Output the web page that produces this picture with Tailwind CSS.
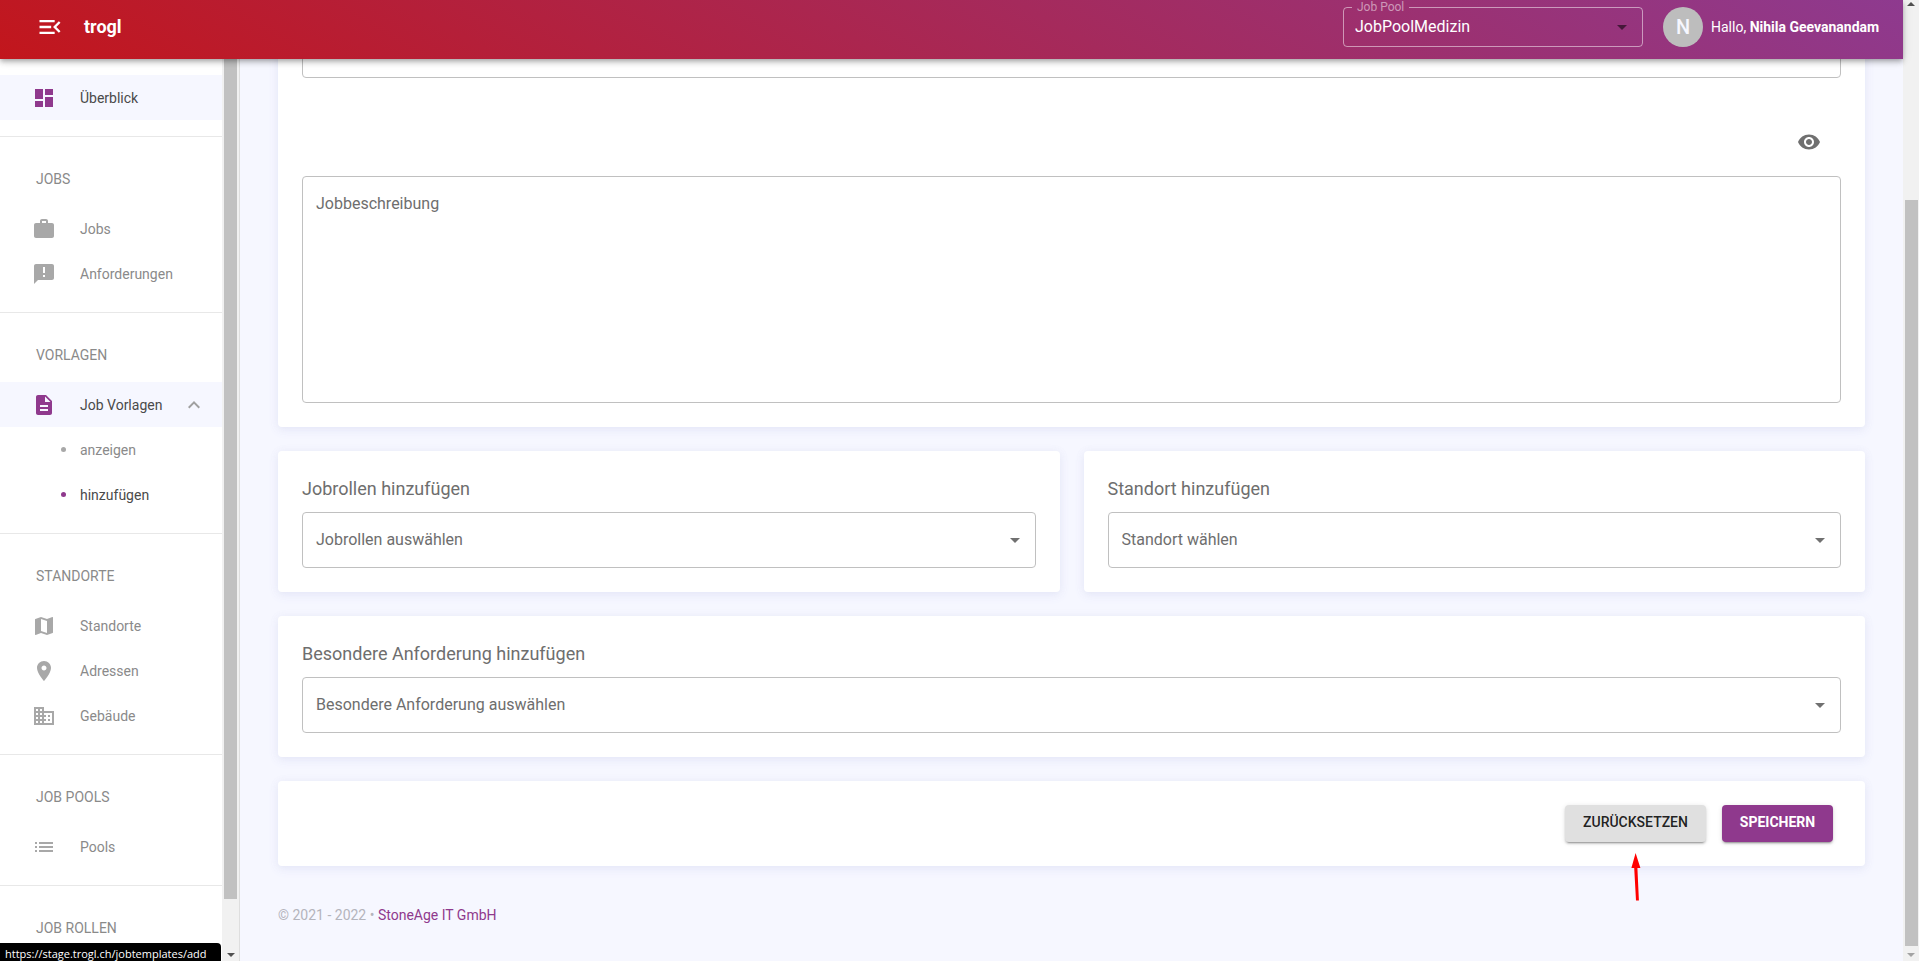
<!DOCTYPE html>
<html lang="de">
<head>
<meta charset="utf-8">
<meta name="viewport" content="width=device-width, initial-scale=1">
<title>trogl – Job Vorlage hinzufügen</title>
<script src="https://cdn.jsdelivr.net/npm/@tailwindcss/browser@4"></script>
</head>
<body class="flex h-screen overflow-hidden bg-[#f6f7ff] font-['Roboto',sans-serif] text-sm text-[#4a4a4a]">

<div class="flex min-w-0 flex-1 flex-col">
  <header class="z-10 flex h-[59px] shrink-0 items-start justify-between bg-[linear-gradient(30deg,#c2161c,#8e3a8f)] pr-5 pl-9 text-white shadow-[0_2px_4px_-1px_rgba(0,0,0,0.2),0_4px_5px_0_rgba(0,0,0,0.14),0_1px_10px_0_rgba(0,0,0,0.12)]">
    <div class="flex items-center gap-5 pt-[13px]">
      <button type="button" aria-label="Menü einklappen" class="size-7">
        <svg viewBox="0 0 24 24" class="size-7 fill-current"><path d="M3 18h13v-2H3v2zm0-5h10v-2H3v2zm0-7v2h13V6H3zm18 9.59L17.42 12 21 8.41 19.59 7l-5 5 5 5L21 15.59z"/></svg>
      </button>
      <a href="#" class="text-lg leading-7 font-bold">trogl</a>
    </div>
    <div class="flex items-start">
      <fieldset class="relative h-[47px] w-[300px] rounded border border-white/50">
        <legend class="ml-2 px-[5px] text-xs leading-[14px] text-white/50"><label for="pool">Job Pool</label></legend>
        <select id="pool" class="block h-[26px] w-full appearance-none bg-transparent pl-[11px] text-base leading-[26px] text-white">
          <option>JobPoolMedizin</option>
        </select>
        <svg viewBox="0 0 24 24" class="pointer-events-none absolute right-2 bottom-[7px] size-6 fill-black/54"><path d="M7 10l5 5 5-5z"/></svg>
      </fieldset>
      <div class="flex items-center pt-[7px] pl-5">
        <div class="flex size-10 items-center justify-center rounded-full bg-[#bdbdbd] text-xl font-medium text-[#f6f7ff]">N</div>
        <p class="min-w-[180px] pl-2">Hallo, <b class="font-bold">Nihila Geevanandam</b></p>
      </div>
    </div>
  </header>

  <div class="flex min-h-0 flex-1">
    <nav class="w-[222px] shrink-0 overflow-hidden bg-white pt-4 text-[#8a8a8a]" aria-label="Hauptnavigation">
      <a href="#" class="flex h-[45px] items-center gap-6 bg-[#f6f7ff] pl-8 text-[#4a4a4a]">
        <svg viewBox="0 0 24 24" class="size-6 fill-[#8f398d]"><path d="M3 13h8V3H3v10zm0 8h8v-6H3v6zm10 0h8V11h-8v10zm0-18v6h8V3h-8z"/></svg>Überblick</a>

      <section class="mt-4 border-t border-[#e8e8e8]">
        <h2 class="px-9 pt-8 pb-4 leading-[21px]">JOBS</h2>
        <a href="#" class="flex h-[45px] items-center gap-6 pl-8">
          <svg viewBox="0 0 24 24" class="size-6 fill-[#a8a8a8]"><path d="M20 6h-4V4c0-1.11-.89-2-2-2h-4c-1.11 0-2 .89-2 2v2H4c-1.11 0-1.99.89-1.99 2L2 19c0 1.11.89 2 2 2h16c1.11 0 2-.89 2-2V8c0-1.11-.89-2-2-2zm-6 0h-4V4h4v2z"/></svg>Jobs</a>
        <a href="#" class="flex h-[45px] items-center gap-6 pl-8">
          <svg viewBox="0 0 24 24" class="size-6 fill-[#a8a8a8]"><path d="M20 2H4c-1.1 0-1.99.9-1.99 2L2 22l4-4h14c1.1 0 2-.9 2-2V4c0-1.1-.9-2-2-2zm-7 13h-2v-2h2v2zm0-4h-2V5h2v6z"/></svg>Anforderungen</a>
      </section>

      <section class="mt-4 border-t border-[#e8e8e8]">
        <h2 class="px-9 pt-8 pb-4 leading-[21px]">VORLAGEN</h2>
        <button type="button" aria-expanded="true" class="flex h-[45px] w-full items-center gap-6 bg-[#f6f7ff] pr-4 pl-8 text-[#4a4a4a]">
          <svg viewBox="0 0 24 24" class="size-6 fill-[#8f398d]"><path d="M14 2H6c-1.1 0-1.99.9-1.99 2L4 20c0 1.1.89 2 1.99 2H18c1.1 0 2-.9 2-2V8l-6-6zm2 16H8v-2h8v2zm0-4H8v-2h8v2zm-3-5V3.5L18.5 9H13z"/></svg>
          <span class="flex-1 text-left whitespace-nowrap">Job Vorlagen</span>
          <svg viewBox="0 0 24 24" class="-ml-6 size-6 fill-[#a0a0a0]"><path d="M12 8l-6 6 1.41 1.41L12 10.83l4.59 4.58L18 14z"/></svg>
        </button>
        <a href="#" class="flex h-[45px] items-center gap-3.5 pl-[61px]"><i class="size-[5px] rounded-full bg-[#a8a8a8]"></i>anzeigen</a>
        <a href="#" class="flex h-[45px] items-center gap-3.5 pl-[61px] text-[#4a4a4a]"><i class="size-[5px] rounded-full bg-[#8f398d]"></i>hinzufügen</a>
      </section>

      <section class="mt-4 border-t border-[#e8e8e8]">
        <h2 class="px-9 pt-8 pb-4 leading-[21px]">STANDORTE</h2>
        <a href="#" class="flex h-[45px] items-center gap-6 pl-8">
          <svg viewBox="0 0 24 24" class="size-6 fill-[#a8a8a8]"><path d="M20.5 3l-.16.03L15 5.1 9 3 3.36 4.9c-.21.07-.36.25-.36.48V20.5c0 .28.22.5.5.5l.16-.03L9 18.9l6 2.1 5.64-1.9c.21-.07.36-.25.36-.48V3.5c0-.28-.22-.5-.5-.5zM15 19l-6-2.11V5l6 2.11V19z"/></svg>Standorte</a>
        <a href="#" class="flex h-[45px] items-center gap-6 pl-8">
          <svg viewBox="0 0 24 24" class="size-6 fill-[#a8a8a8]"><path d="M12 2C8.13 2 5 5.13 5 9c0 5.25 7 13 7 13s7-7.75 7-13c0-3.87-3.13-7-7-7zm0 9.5c-1.38 0-2.5-1.12-2.5-2.5s1.12-2.5 2.5-2.5 2.5 1.12 2.5 2.5-1.12 2.5-2.5 2.5z"/></svg>Adressen</a>
        <a href="#" class="flex h-[45px] items-center gap-6 pl-8">
          <svg viewBox="0 0 24 24" class="size-6 fill-[#a8a8a8]"><path d="M12 7V3H2v18h20V7H12zM6 19H4v-2h2v2zm0-4H4v-2h2v2zm0-4H4V9h2v2zm0-4H4V5h2v2zm4 12H8v-2h2v2zm0-4H8v-2h2v2zm0-4H8V9h2v2zm0-4H8V5h2v2zm10 12h-8v-2h2v-2h-2v-2h2v-2h-2V9h8v10zm-2-8h-2v2h2v-2zm0 4h-2v2h2v-2z"/></svg>Gebäude</a>
      </section>

      <section class="mt-4 border-t border-[#e8e8e8]">
        <h2 class="px-9 pt-8 pb-4 leading-[21px]">JOB POOLS</h2>
        <a href="#" class="flex h-[45px] items-center gap-6 pl-8">
          <svg viewBox="0 0 24 24" class="size-6 fill-[#a8a8a8]"><path d="M3 13h2v-2H3v2zm0 4h2v-2H3v2zm0-8h2V7H3v2zm4 4h14v-2H7v2zm0 4h14v-2H7v2zM7 7v2h14V7H7z"/></svg>Pools</a>
      </section>

      <section class="mt-4 border-t border-[#e8e8e8]">
        <h2 class="px-9 pt-8 leading-[21px]">JOB ROLLEN</h2>
      </section>
    </nav>

    <!-- sidebar scrollbar -->
    <div class="flex w-[18px] shrink-0 flex-col items-center border-r border-[#dedede] bg-[#f1f1f1]" aria-hidden="true">
      <div class="w-[13px] flex-1 bg-[#c1c1c1]"></div>
      <div class="flex h-[62px] items-end pb-1"><svg viewBox="0 0 8 4" class="h-1 w-2 fill-[#505050]"><path d="M0 0h8L4 4z"/></svg></div>
    </div>

    <main class="flex min-w-0 flex-1 flex-col justify-end overflow-hidden px-[38px] pb-[35px]">
      <form class="flex shrink-0 flex-col gap-6">
        <div class="rounded bg-white p-6 shadow-[0_3px_11px_0_#e8eafc,0_3px_3px_-2px_#b2b2b21a,0_1px_8px_0_#9a9a9a1a]">
          <input type="text" aria-label="Titel" class="block h-14 w-full rounded border border-[#c0c0c0] px-3.5 text-base">
          <div class="flex justify-end pt-10 pr-2 pb-2.5">
            <button type="button" aria-label="Vorschau" class="p-3">
              <svg viewBox="0 0 24 24" class="size-6 fill-[#707070]"><path d="M12 4.5C7 4.5 2.73 7.61 1 12c1.73 4.39 6 7.5 11 7.5s9.27-3.11 11-7.5c-1.73-4.39-6-7.5-11-7.5zM12 17c-2.76 0-5-2.24-5-5s2.24-5 5-5 5 2.24 5 5-2.24 5-5 5zm0-8c-1.66 0-3 1.34-3 3s1.34 3 3 3 3-1.34 3-3-1.34-3-3-3z"/></svg>
            </button>
          </div>
          <textarea aria-label="Jobbeschreibung" placeholder="Jobbeschreibung" class="block h-[227px] w-full resize-none rounded border border-[#c0c0c0] px-[13px] py-[15px] text-base leading-6 placeholder:text-[#6e6e6e]"></textarea>
        </div>

        <div class="grid grid-cols-2 gap-6">
          <div class="rounded bg-white p-6 shadow-[0_3px_11px_0_#e8eafc,0_3px_3px_-2px_#b2b2b21a,0_1px_8px_0_#9a9a9a1a]">
            <label for="rollen" class="mb-2.5 block text-lg leading-[27px] text-[#6e6e6e]">Jobrollen hinzufügen</label>
            <div class="relative">
              <select id="rollen" class="block h-14 w-full appearance-none rounded border border-[#c0c0c0] bg-white px-[13px] text-base text-[#6e6e6e]"><option>Jobrollen auswählen</option></select>
              <svg viewBox="0 0 24 24" class="pointer-events-none absolute top-4 right-[9px] size-6 fill-[#707070]"><path d="M7 10l5 5 5-5z"/></svg>
            </div>
          </div>
          <div class="rounded bg-white p-6 shadow-[0_3px_11px_0_#e8eafc,0_3px_3px_-2px_#b2b2b21a,0_1px_8px_0_#9a9a9a1a]">
            <label for="standort" class="mb-2.5 block text-lg leading-[27px] text-[#6e6e6e]">Standort hinzufügen</label>
            <div class="relative">
              <select id="standort" class="block h-14 w-full appearance-none rounded border border-[#c0c0c0] bg-white px-[13px] text-base text-[#6e6e6e]"><option>Standort wählen</option></select>
              <svg viewBox="0 0 24 24" class="pointer-events-none absolute top-4 right-[9px] size-6 fill-[#707070]"><path d="M7 10l5 5 5-5z"/></svg>
            </div>
          </div>
        </div>

        <div class="rounded bg-white p-6 shadow-[0_3px_11px_0_#e8eafc,0_3px_3px_-2px_#b2b2b21a,0_1px_8px_0_#9a9a9a1a]">
          <label for="anforderung" class="mb-2.5 block text-lg leading-[27px] text-[#6e6e6e]">Besondere Anforderung hinzufügen</label>
          <div class="relative">
            <select id="anforderung" class="block h-14 w-full appearance-none rounded border border-[#c0c0c0] bg-white px-[13px] text-base text-[#6e6e6e]"><option>Besondere Anforderung auswählen</option></select>
            <svg viewBox="0 0 24 24" class="pointer-events-none absolute top-4 right-[9px] size-6 fill-[#707070]"><path d="M7 10l5 5 5-5z"/></svg>
          </div>
        </div>

        <div class="flex justify-end gap-4 rounded bg-white py-6 pr-8 pl-6 shadow-[0_3px_11px_0_#e8eafc,0_3px_3px_-2px_#b2b2b21a,0_1px_8px_0_#9a9a9a1a]">
          <div class="relative">
            <button type="reset" class="h-[37px] w-[141px] rounded bg-[#e0e0e0] pb-[3px] font-medium text-black/87 shadow-[0_3px_1px_-2px_rgba(0,0,0,0.2),0_2px_2px_0_rgba(0,0,0,0.14),0_1px_5px_0_rgba(0,0,0,0.12)]">ZURÜCKSETZEN</button>
            <svg viewBox="0 0 10 48" class="pointer-events-none absolute top-12 left-[66px] h-12 w-2.5" aria-hidden="true"><path d="M4.6 0L9.4 15H6.4L7.9 47.5H5L3.2 15H0.4z" fill="#ff0000"/></svg>
          </div>
          <button type="submit" class="h-[37px] w-[111px] rounded bg-[#8f398d] pb-[3px] font-bold text-white shadow-[0_3px_1px_-2px_rgba(0,0,0,0.2),0_2px_2px_0_rgba(0,0,0,0.14),0_1px_5px_0_rgba(0,0,0,0.12)]">SPEICHERN</button>
        </div>
      </form>
      <footer class="shrink-0 pt-[39px] leading-[21px] text-[#b4b4bc]">© 2021 - 2022 • <a href="#" class="text-[#8f398d]">StoneAge IT GmbH</a></footer>
    </main>
  </div>
</div>

<!-- window scrollbar -->
<div class="flex w-4 shrink-0 flex-col items-center bg-[#f1f1f1]" aria-hidden="true">
  <div class="h-[200px] pt-0.5"><svg viewBox="0 0 8 4" class="h-1 w-2 fill-[#505050]"><path d="M0 4h8L4 0z"/></svg></div>
  <div class="w-[13px] flex-1 bg-[#c1c1c1]"></div>
  <div class="flex h-[15px] items-end pb-1"><svg viewBox="0 0 8 4" class="h-1 w-2 fill-[#a3a3a3]"><path d="M0 0h8L4 4z"/></svg></div>
</div>

<!-- browser link status -->
<div class="fixed bottom-0 left-0 z-20 h-[18px] w-[221px] rounded-tr bg-black pl-[5px] font-['Open_Sans',sans-serif] text-[11px] leading-[22px] whitespace-nowrap text-white">https://stage.trogl.ch/jobtemplates/add</div>
</body>
</html>
